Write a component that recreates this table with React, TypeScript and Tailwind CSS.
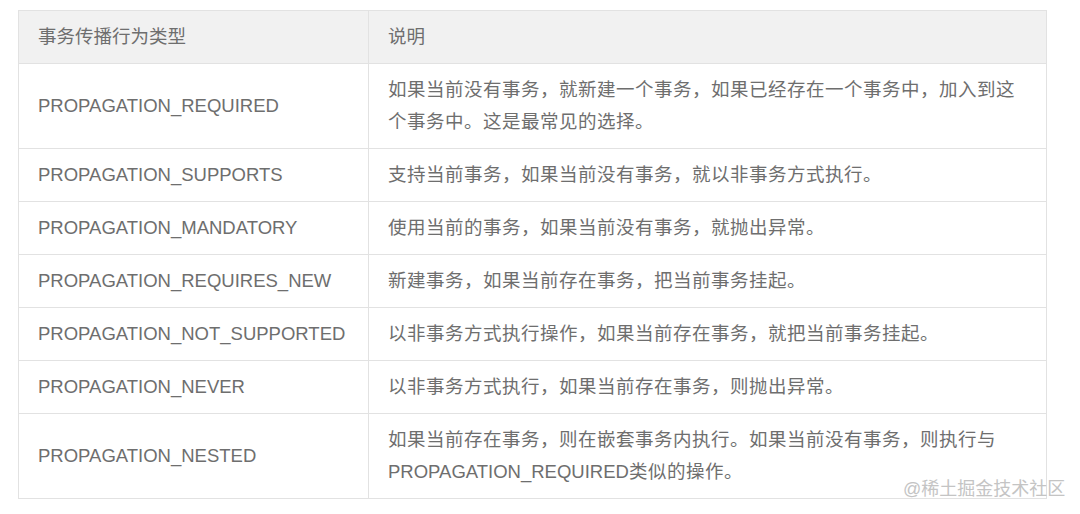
import React from "react";

const rows: [string, React.ReactNode[], number][] = [
  ["PROPAGATION_REQUIRED", ["如果当前没有事务，就新建一个事务，如果已经存在一个事务中，加入到这", "个事务中。这是最常见的选择。"], 85],
  ["PROPAGATION_SUPPORTS", ["支持当前事务，如果当前没有事务，就以非事务方式执行。"], 53],
  ["PROPAGATION_MANDATORY", ["使用当前的事务，如果当前没有事务，就抛出异常。"], 53],
  ["PROPAGATION_REQUIRES_NEW", ["新建事务，如果当前存在事务，把当前事务挂起。"], 53],
  ["PROPAGATION_NOT_SUPPORTED", ["以非事务方式执行操作，如果当前存在事务，就把当前事务挂起。"], 53],
  ["PROPAGATION_NEVER", ["以非事务方式执行，如果当前存在事务，则抛出异常。"], 53],
  [
    "PROPAGATION_NESTED",
    [
      "如果当前存在事务，则在嵌套事务内执行。如果当前没有事务，则执行与",
      <>
        <span className="tracking-normal">PROPAGATION_REQUIRED</span>类似的操作。
      </>,
    ],
    84,
  ],
];

export default function App() {
  return (
    <div
      className="relative w-[1080px] h-[514px] bg-white pt-[10px] pl-[18px] text-[#6e6e6e]"
      style={{ fontFamily: '"Liberation Sans", "Noto Sans CJK SC", sans-serif' }}
    >
      <div className="w-[1029px] border border-[#e2e2e2] text-[18.5px]">
        <div className="flex h-[53px] bg-[#f1f1f1] border-b border-[#e2e2e2]">
          <div className="w-[350px] shrink-0 flex items-center pl-[19px] border-r border-[#e2e2e2]">事务传播行为类型</div>
          <div className="flex-1 flex items-center pl-[19px]">说明</div>
        </div>
        {rows.map(([k, lines, h], i) => (
          <div
            key={k}
            className={"flex " + (i < rows.length - 1 ? "border-b border-[#e2e2e2]" : "")}
            style={{ height: h }}
          >
            <div className="w-[350px] shrink-0 flex items-center pl-[19px] border-r border-[#e2e2e2]">{k}</div>
            <div className="flex-1 flex flex-col justify-center pl-[19px] leading-[32px] tracking-[0.5px]">
              {lines.map((l, j) => (
                <div key={j} className="whitespace-nowrap">{l}</div>
              ))}
            </div>
          </div>
        ))}
      </div>
      <div className="absolute left-[903px] top-[476px] text-[18px] text-[#c4c4c4] whitespace-nowrap">@稀土掘金技术社区</div>
    </div>
  );
}
